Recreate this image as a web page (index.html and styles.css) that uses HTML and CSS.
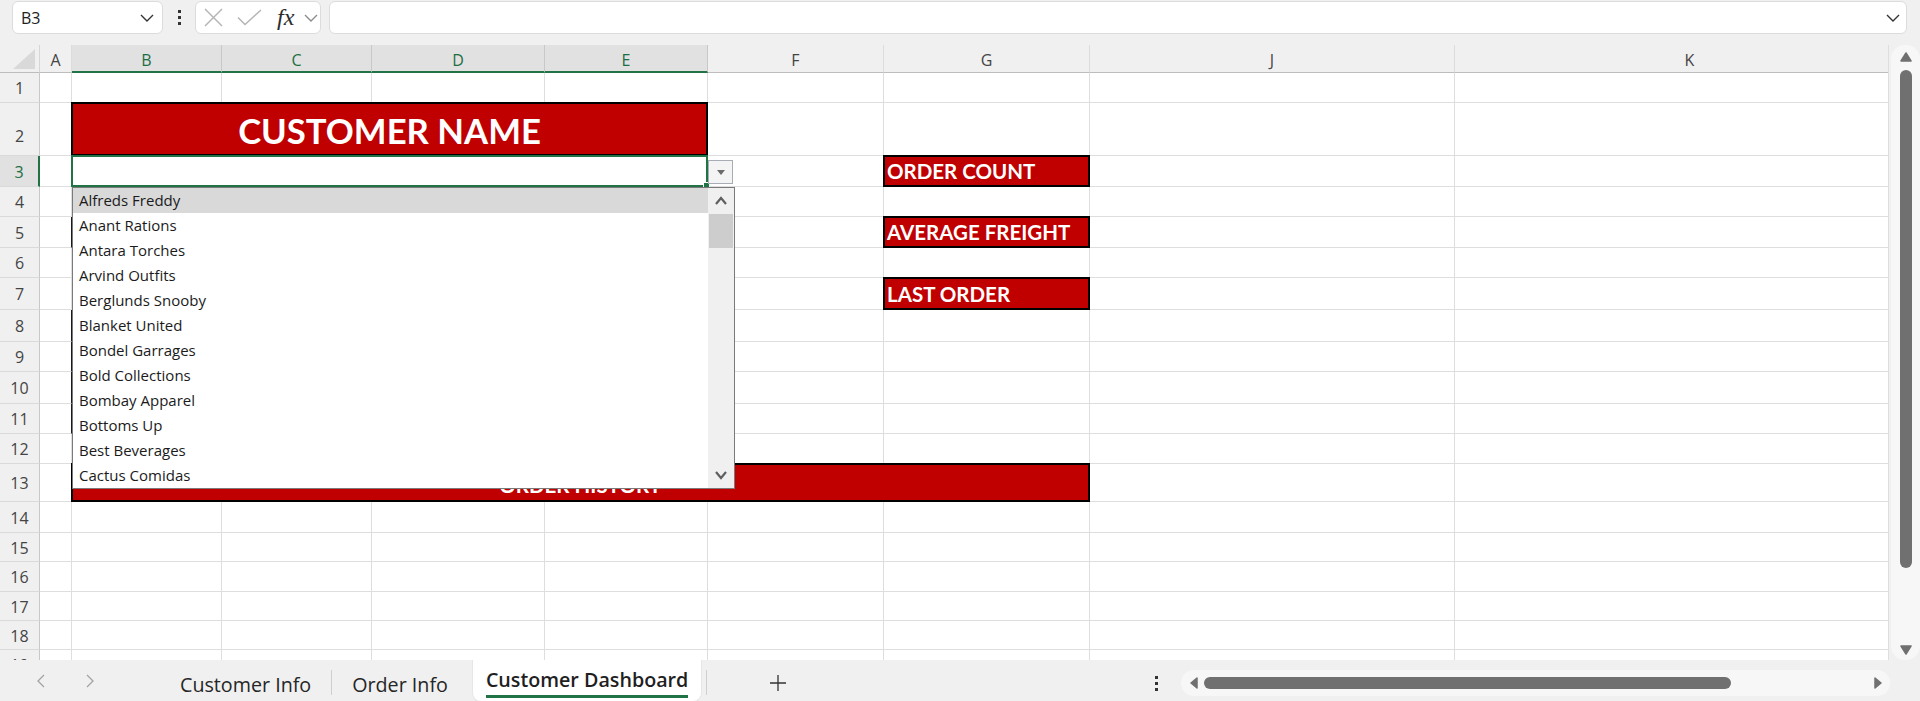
FILE: index.html
```html
<!DOCTYPE html>
<html>
<head>
<meta charset="utf-8">
<link rel="stylesheet" href="styles.css">
</head>
<body>
<div class="app">
  <div class="fbar">
    <div class="namebox"><span>B3</span>
      <svg class="chev" width="14" height="8" viewBox="0 0 14 8"><polyline points="1,1 7,7 13,1" fill="none" stroke="#333" stroke-width="1.4"/></svg>
    </div>
    <div class="vdots"><span></span><span></span><span></span></div>
    <div class="fxbox">
      <svg width="19" height="19" viewBox="0 0 19 19"><path d="M1 1L18 18M18 1L1 18" stroke="#b5b5b5" stroke-width="1.5" fill="none"/></svg>
      <svg class="chk" width="25" height="17" viewBox="0 0 25 17"><polyline points="1,8.5 8,15.5 24,1" fill="none" stroke="#b5b5b5" stroke-width="1.5"/></svg>
      <span class="fx">fx</span>
      <svg class="fxchev" width="14" height="8" viewBox="0 0 14 8"><polyline points="1,1 7,7 13,1" fill="none" stroke="#8c8c8c" stroke-width="1.4"/></svg>
    </div>
    <div class="finput">
      <svg width="14" height="8" viewBox="0 0 14 8"><polyline points="1,1 7,7 13,1" fill="none" stroke="#333" stroke-width="1.4"/></svg>
    </div>
  </div>

  <div class="main">
    <div class="grid">
      <div class="row hdr">
        <div class="corner"><svg width="22" height="20" viewBox="0 0 22 20"><polygon points="22,0 22,20 0,20" fill="#d9d9d9"/></svg></div>
        <div class="ch">A</div>
        <div class="ch sel">B</div><div class="ch sel">C</div><div class="ch sel">D</div><div class="ch sel">E</div>
        <div class="ch">F</div><div class="ch">G</div><div class="ch">J</div><div class="ch">K</div>
      </div>
      <div class="row r30"><div class="rh">1</div><div class="c"></div><div class="c"></div><div class="c"></div><div class="c"></div><div class="c"></div><div class="c"></div><div class="c"></div><div class="c"></div><div class="c"></div></div>
      <div class="row r53"><div class="rh rh-low">2</div><div class="c"></div><div class="c box title s4">CUSTOMER NAME</div><div class="c"></div><div class="c"></div><div class="c"></div><div class="c"></div></div>
      <div class="row r31"><div class="rh sel">3</div><div class="c"></div><div class="c selcell s4"></div><div class="c"></div><div class="c box lbl">ORDER COUNT</div><div class="c"></div><div class="c"></div></div>
      <div class="row r30"><div class="rh">4</div><div class="c"></div><div class="c"></div><div class="c"></div><div class="c"></div><div class="c"></div><div class="c"></div><div class="c"></div><div class="c"></div><div class="c"></div></div>
      <div class="row r31"><div class="rh">5</div><div class="c bk"></div><div class="c"></div><div class="c"></div><div class="c"></div><div class="c"></div><div class="c"></div><div class="c box lbl">AVERAGE FREIGHT</div><div class="c"></div><div class="c"></div></div>
      <div class="row r30"><div class="rh">6</div><div class="c"></div><div class="c"></div><div class="c"></div><div class="c"></div><div class="c"></div><div class="c"></div><div class="c"></div><div class="c"></div><div class="c"></div></div>
      <div class="row r32"><div class="rh">7</div><div class="c"></div><div class="c"></div><div class="c"></div><div class="c"></div><div class="c"></div><div class="c"></div><div class="c box lbl">LAST ORDER</div><div class="c"></div><div class="c"></div></div>
      <div class="row r32"><div class="rh">8</div><div class="c bk"></div><div class="c"></div><div class="c"></div><div class="c"></div><div class="c"></div><div class="c"></div><div class="c"></div><div class="c"></div><div class="c"></div></div>
      <div class="row r30"><div class="rh">9</div><div class="c bk"></div><div class="c"></div><div class="c"></div><div class="c"></div><div class="c"></div><div class="c"></div><div class="c"></div><div class="c"></div><div class="c"></div></div>
      <div class="row r32"><div class="rh">10</div><div class="c bk"></div><div class="c"></div><div class="c"></div><div class="c"></div><div class="c"></div><div class="c"></div><div class="c"></div><div class="c"></div><div class="c"></div></div>
      <div class="row r30"><div class="rh">11</div><div class="c bk"></div><div class="c"></div><div class="c"></div><div class="c"></div><div class="c"></div><div class="c"></div><div class="c"></div><div class="c"></div><div class="c"></div></div>
      <div class="row r30"><div class="rh">12</div><div class="c"></div><div class="c"></div><div class="c"></div><div class="c"></div><div class="c"></div><div class="c"></div><div class="c"></div><div class="c"></div><div class="c"></div></div>
      <div class="row r38"><div class="rh">13</div><div class="c"></div><div class="c box hist s6">ORDER HISTORY</div><div class="c"></div><div class="c"></div></div>
      <div class="row r31"><div class="rh">14</div><div class="c"></div><div class="c"></div><div class="c"></div><div class="c"></div><div class="c"></div><div class="c"></div><div class="c"></div><div class="c"></div><div class="c"></div></div>
      <div class="row r29"><div class="rh">15</div><div class="c"></div><div class="c"></div><div class="c"></div><div class="c"></div><div class="c"></div><div class="c"></div><div class="c"></div><div class="c"></div><div class="c"></div></div>
      <div class="row r30"><div class="rh">16</div><div class="c"></div><div class="c"></div><div class="c"></div><div class="c"></div><div class="c"></div><div class="c"></div><div class="c"></div><div class="c"></div><div class="c"></div></div>
      <div class="row r29"><div class="rh">17</div><div class="c"></div><div class="c"></div><div class="c"></div><div class="c"></div><div class="c"></div><div class="c"></div><div class="c"></div><div class="c"></div><div class="c"></div></div>
      <div class="row r29"><div class="rh">18</div><div class="c"></div><div class="c"></div><div class="c"></div><div class="c"></div><div class="c"></div><div class="c"></div><div class="c"></div><div class="c"></div><div class="c"></div></div>
      <div class="row r30"><div class="rh">19</div><div class="c"></div><div class="c"></div><div class="c"></div><div class="c"></div><div class="c"></div><div class="c"></div><div class="c"></div><div class="c"></div><div class="c"></div></div>

      <div class="handle"></div>
      <div class="ddbtn"><svg width="8" height="5" viewBox="0 0 8 5"><polygon points="0,0 8,0 4,5" fill="#6b6b6b"/></svg></div>
      <div class="dd">
        <div class="dd-items">
          <div class="it hl">Alfreds Freddy</div>
          <div class="it">Anant Rations</div>
          <div class="it">Antara Torches</div>
          <div class="it">Arvind Outfits</div>
          <div class="it">Berglunds Snooby</div>
          <div class="it">Blanket United</div>
          <div class="it">Bondel Garrages</div>
          <div class="it">Bold Collections</div>
          <div class="it">Bombay Apparel</div>
          <div class="it">Bottoms Up</div>
          <div class="it">Best Beverages</div>
          <div class="it">Cactus Comidas</div>
        </div>
        <div class="dd-sb">
          <div class="dd-arrow"><svg width="12" height="9" viewBox="0 0 12 9"><polyline points="1,8 6,2 11,8" fill="none" stroke="#5f5f5f" stroke-width="2.2"/></svg></div>
          <div class="dd-thumb"></div>
          <div class="dd-track"></div>
          <div class="dd-arrow"><svg width="12" height="9" viewBox="0 0 12 9"><polyline points="1,1 6,7 11,1" fill="none" stroke="#5f5f5f" stroke-width="2.2"/></svg></div>
        </div>
      </div>
    </div>
    <div class="vscroll">
      <div class="vtrack">
        <svg class="varrow" width="12" height="10" viewBox="0 0 12 10"><path d="M6 1L11 9H1Z" fill="#707070" stroke="#707070" stroke-width="1.5" stroke-linejoin="round"/></svg>
        <div class="vthumb"></div>
        <div class="vspace"></div>
        <svg class="varrow" width="12" height="10" viewBox="0 0 12 10"><path d="M6 9L11 1H1Z" fill="#707070" stroke="#707070" stroke-width="1.5" stroke-linejoin="round"/></svg>
      </div>
    </div>
  </div>

  <div class="tabbar">
    <div class="nav"><svg width="8" height="14" viewBox="0 0 8 14"><polyline points="7,1 1,7 7,13" fill="none" stroke="#a3a3a3" stroke-width="1.3"/></svg></div>
    <div class="nav"><svg width="8" height="14" viewBox="0 0 8 14"><polyline points="1,1 7,7 1,13" fill="none" stroke="#a3a3a3" stroke-width="1.3"/></svg></div>
    <div class="tab t1">Customer Info</div>
    <div class="tsep"></div>
    <div class="tab t2">Order Info</div>
    <div class="tab active"><span>Customer Dashboard</span></div>
    <div class="tsep s3"></div>
    <div class="plus"><svg width="16" height="16" viewBox="0 0 16 16"><path d="M8 0V16M0 8H16" stroke="#333" stroke-width="1.3"/></svg></div>
    <div class="tdots"><span></span><span></span><span></span></div>
    <div class="hscroll">
      <svg width="8" height="12" viewBox="0 0 8 12"><path d="M1 6L7 1V11Z" fill="#707070" stroke="#707070" stroke-width="1.5" stroke-linejoin="round"/></svg>
      <div class="hthumb"></div>
      <div class="hspace"></div>
      <svg width="8" height="12" viewBox="0 0 8 12"><path d="M7 6L1 1V11Z" fill="#707070" stroke="#707070" stroke-width="1.5" stroke-linejoin="round"/></svg>
    </div>
  </div>
</div>
</body>
</html>
```

FILE: styles.css
```css
html, body {
  margin: 0;
  padding: 0;
}
body {
  background: #f0f0f0;
  font-family: "Open Sans", "Noto Sans", sans-serif;
  width: 1920px;
  height: 701px;
  overflow: hidden;
}
.app {
  display: flex;
  flex-direction: column;
  height: 701px;
}

/* formula bar */
.fbar {
  display: flex;
  align-items: flex-start;
  height: 35px;
  padding: 1px 13px 0 12px;
  box-sizing: border-box;
}
.namebox, .fxbox, .finput {
  height: 33px;
  box-sizing: border-box;
  background: #fff;
  border: 1px solid #dcdcdc;
  border-radius: 6px;
  display: flex;
  align-items: center;
}
.namebox {
  width: 151px;
  justify-content: space-between;
  padding: 0 8px 0 8px;
  font-size: 16px;
  color: #222;
}
.vdots {
  width: 32px;
  height: 33px;
  display: flex;
  flex-direction: column;
  align-items: center;
  justify-content: center;
  gap: 3px;
}
.vdots span, .tdots span {
  width: 3px;
  height: 3px;
  background: #333;
}
.fxbox {
  width: 126px;
  padding-left: 8px;
}
.fxbox .chk {
  margin-left: 14px;
}
.fx {
  font-family: "Liberation Serif", serif;
  font-style: italic;
  font-size: 24px;
  color: #2b2b2b;
  margin-left: 15px;
  line-height: 24px;
  margin-top: -2px;
}
.fxbox .fxchev {
  margin-left: 10px;
}
.finput {
  flex: 1;
  margin-left: 8px;
  justify-content: flex-end;
  padding-right: 6px;
}

/* main sheet */
.main {
  display: flex;
  height: 615px;
  margin-top: 10px;
}
.grid {
  position: relative;
  width: 1888px;
  height: 615px;
  overflow: hidden;
  background: #fff;
}
.row {
  display: grid;
  grid-template-columns: 40px 32px 150px 150px 173px 163px 176px 206px 365px 470px;
}
.hdr { height: 28px; background: #f0f0f0; }
.r29 { height: 29px; }
.r30 { height: 30px; }
.r31 { height: 31px; }
.r32 { height: 32px; }
.r38 { height: 38px; }
.r53 { height: 53px; }

.corner {
  box-sizing: border-box;
  border-right: 1px solid #d6d6d6;
  border-bottom: 1px solid #bdbdbd;
  display: flex;
  align-items: flex-end;
  justify-content: flex-end;
  padding: 0 4px 3px 0;
}
.ch {
  box-sizing: border-box;
  border-right: 1px solid #dcdcdc;
  border-bottom: 1px solid #bdbdbd;
  font-size: 16px;
  color: #444;
  display: flex;
  align-items: center;
  justify-content: center;
  padding-top: 3px;
}
.ch.sel {
  background: #e1e1e1;
  color: #1e6e43;
  border-right-color: #c8c8c8;
  border-bottom: 2px solid #217346;
}
.rh {
  box-sizing: border-box;
  background: #f0f0f0;
  border-right: 1px solid #c8c8c8;
  border-bottom: 1px solid #dadada;
  font-size: 16px;
  color: #444;
  display: flex;
  align-items: center;
  justify-content: center;
  padding-top: 1px;
  overflow: hidden;
}
.rh-low { padding-top: 14px; }
.rh.sel {
  background: #e1e1e1;
  color: #1e6e43;
  border-right: 2px solid #217346;
}
.c {
  box-sizing: border-box;
  border-right: 1px solid #dedede;
  border-bottom: 1px solid #dedede;
}
.c.bk { border-right-color: #1a1a1a; }
.s4 { grid-column: span 4; }
.s6 { grid-column: span 6; }
.box {
  margin: -1px 0 0 -1px;
  background: #c00000;
  border: 2px solid #000;
  color: #fff;
  font-family: Lato, "Open Sans", sans-serif;
  font-weight: 700;
  white-space: nowrap;
  overflow: hidden;
}
.title {
  font-size: 34.7px;
  display: flex;
  align-items: center;
  justify-content: center;
  padding-top: 2px;
}
.lbl {
  font-size: 20.5px;
  display: flex;
  align-items: flex-end;
  padding: 0 0 4px 2px;
  line-height: 1;
}
.hist {
  font-size: 20.5px;
  display: flex;
  align-items: flex-end;
  justify-content: center;
  padding-bottom: 5px;
  line-height: 1;
}
.selcell {
  margin: -1px 0 0 -1px;
  border: 2px solid #217346;
}
.handle {
  position: absolute;
  left: 704px;
  top: 138px;
  width: 5px;
  height: 5px;
  background: #217346;
  outline: 1px solid #fff;
}
.ddbtn {
  position: absolute;
  left: 708px;
  top: 115px;
  width: 25px;
  height: 24px;
  box-sizing: border-box;
  border: 1px solid #a7adb4;
  background: #f4f4f4;
  display: flex;
  align-items: center;
  justify-content: center;
}
.dd {
  position: absolute;
  left: 72px;
  top: 142px;
  width: 663px;
  height: 302px;
  box-sizing: border-box;
  border: 1px solid #7a7a7a;
  background: #fff;
  display: flex;
}
.dd-items {
  flex: 1;
}
.it {
  height: 25px;
  line-height: 25px;
  padding-left: 6px;
  font-size: 15px;
  color: #1b1b1b;
}
.it.hl { background: #d9d9d9; }
.dd-sb {
  width: 26px;
  background: #f0f0f0;
  display: flex;
  flex-direction: column;
}
.dd-arrow {
  height: 25px;
  display: flex;
  align-items: center;
  justify-content: center;
}
.dd-thumb {
  height: 34px;
  margin: 1px 1px 0 1px;
  background: #cdcdcd;
}
.dd-track { flex: 1; }

/* vertical scrollbar */
.vscroll {
  width: 31px;
  border-left: 1px solid #dedede;
  display: flex;
  justify-content: flex-end;
}
.vtrack {
  width: 29px;
  height: 615px;
  background: #f7f7f7;
  border-radius: 14px;
  display: flex;
  flex-direction: column;
  align-items: center;
  padding: 7px 0 5px;
  box-sizing: border-box;
}
.vthumb {
  width: 12px;
  height: 498px;
  margin-top: 8px;
  background: #707070;
  border-radius: 6px;
}
.vspace { flex: 1; }

/* tab bar */
.tabbar {
  height: 41px;
  display: flex;
  align-items: stretch;
  padding-left: 16px;
}
.nav {
  width: 49px;
  display: flex;
  align-items: center;
  justify-content: center;
}
.tab {
  font-size: 19.7px;
  color: #262626;
  display: flex;
  align-items: center;
  white-space: nowrap;
}
.t1 {
  margin-left: 46px;
  padding: 7px 20px 0 20px;
}
.t2 {
  padding: 7px 20px 0 20px;
}
.tsep {
  width: 1px;
  background: #cfcfcf;
  margin: 10px 0 6px;
}
.active {
  margin-left: 5px;
  background: #fff;
  border-radius: 0 0 8px 8px;
  padding: 0 13px;
  font-weight: 600;
  color: #1f1f1f;
  align-items: flex-start;
  box-shadow: 0 0 0 1px #e6e6e6;
}
.active span {
  display: block;
  border-bottom: 3px solid #217346;
  margin-top: 5px;
  line-height: 30px;
}
.s3 { margin-left: 5px; }
.plus {
  width: 60px;
  margin-left: 41px;
  padding-top: 4px;
  display: flex;
  align-items: center;
  justify-content: center;
}
.tdots {
  margin-left: auto;
  width: 8px;
  padding-top: 5px;
  display: flex;
  flex-direction: column;
  align-items: center;
  justify-content: center;
  gap: 3px;
}
.hscroll {
  margin: 10px 30px 0 21px;
  width: 709px;
  height: 26px;
  background: #f7f7f7;
  border-radius: 13px;
  display: flex;
  align-items: center;
  padding: 0 8px 0 9px;
  box-sizing: border-box;
}
.hthumb {
  width: 527px;
  height: 12px;
  margin-left: 6px;
  background: #707070;
  border-radius: 6px;
}
.hspace { flex: 1; }
```
